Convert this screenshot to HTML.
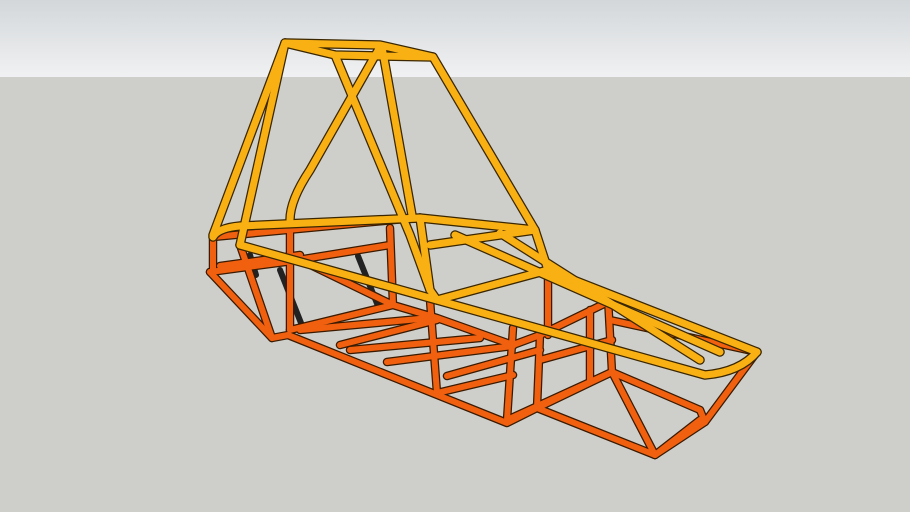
<!DOCTYPE html>
<html><head><style>
html,body{margin:0;padding:0;width:910px;height:512px;overflow:hidden;background:#cececa}
.sky{position:absolute;left:0;top:0;width:910px;height:77px;background:linear-gradient(#d3d7da,#f0f1f2)}
svg{position:absolute;left:0;top:0}
</style></head><body>
<div class="sky"></div>
<svg width="910" height="512" viewBox="0 0 910 512">
<defs>
<g id="or">
<path d="M210 272 L272 338 L288 335 L507 423 L537 408 L655 455 L705 422 L757 352"/>
<path d="M210 272 L285 262 L390 245"/>
<path d="M213 237 L415 218"/>
<path d="M213 237 L213 272"/><path d="M290 225 L290 330"/><path d="M390 228 L393 305"/>
<path d="M430 300 L437 393"/><path d="M513 328 L507 420"/><path d="M540 335 L537 408"/>
<path d="M548 272 L548 335"/><path d="M590 310 L590 380"/><path d="M608 298 L612 372"/>
<path d="M240 245 L272 338"/>
<path d="M290 330 L393 305 L437 318 L513 345 L540 335 L612 300"/>
<path d="M300 330 L430 318"/><path d="M340 345 L437 320"/><path d="M350 350 L480 338"/>
<path d="M387 362 L513 346"/><path d="M437 393 L513 375"/><path d="M447 376 L540 350"/>
<path d="M507 420 L612 372"/><path d="M537 408 L612 372 L700 410"/><path d="M655 455 L612 372"/>
<path d="M540 360 L612 340"/><path d="M610 320 L757 352"/><path d="M655 455 L700 420"/><path d="M700 410 L705 422"/>
<path d="M220 266 L300 255"/><path d="M290 255 L393 305"/>
</g>
<g id="ye">
<path d="M285 43 L380 45 L433 57 L335 55 Z"/>
<path d="M285 43 L240 245"/><path d="M285 43 L213 235"/>
<path d="M335 55 L410 235 L430 290 L437 300"/>
<path d="M433 57 L535 230"/>
<path d="M380 47 L310 170 Q290 200 290 220"/>
<path d="M382 47 L412 215"/>
<path d="M213 237 Q218 228 240 226 L420 218"/>
<path d="M420 218 L535 230 L548 270 L757 352"/>
<path d="M240 245 L705 375 Q740 372 757 352"/>
<path d="M420 218 L430 290"/>
<path d="M430 245 L535 230"/><path d="M455 235 L720 352"/>
<path d="M437 300 L548 270"/><path d="M500 233 L700 360"/>
</g>
</defs>
<g stroke-linecap="round" stroke-linejoin="round" fill="none">
<g stroke="#222" stroke-width="6">
<line x1="250" y1="255" x2="256" y2="275"/>
<line x1="280" y1="270" x2="303" y2="328"/>
<line x1="358" y1="256" x2="378" y2="306"/>
</g>
<use href="#or" stroke="#3a1a00" stroke-width="8.5"/>
<use href="#or" stroke="#f0600f" stroke-width="6"/>
<use href="#ye" stroke="#3a2600" stroke-width="9.5"/>
<use href="#ye" stroke="#f8b013" stroke-width="7"/>
</g>
</svg>
</body></html>
